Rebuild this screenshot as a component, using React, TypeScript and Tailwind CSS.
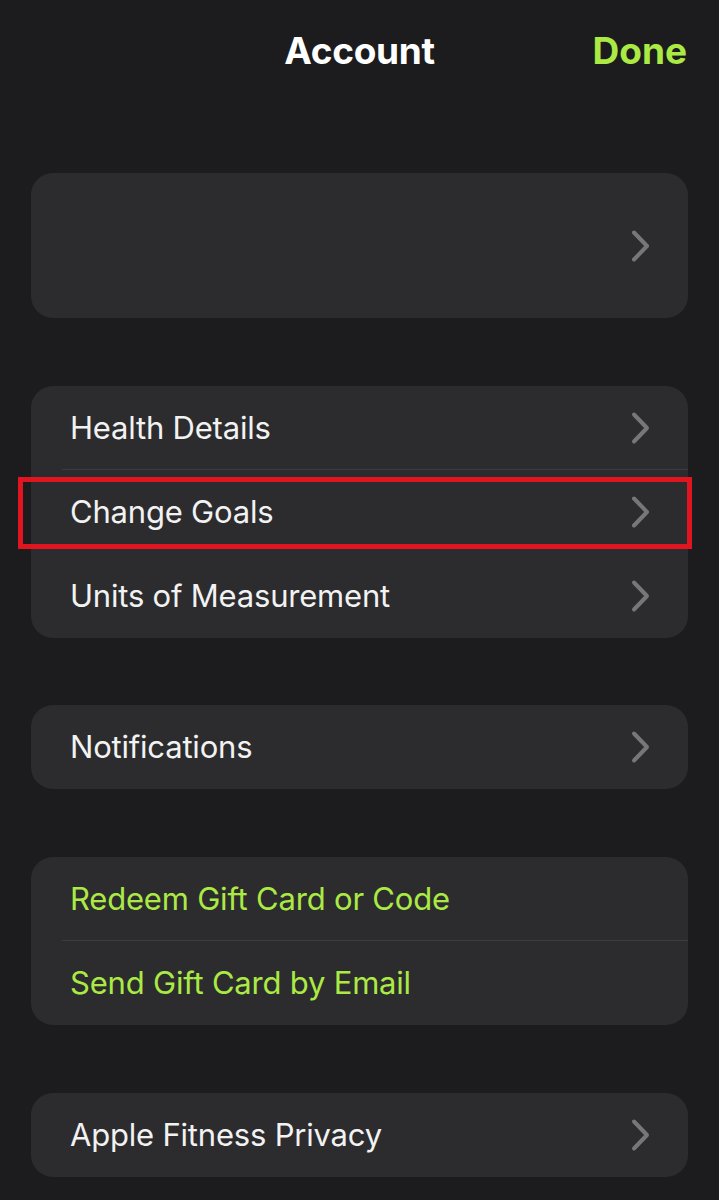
import React from 'react'

const font = { fontFamily: 'Inter, "Noto Sans", sans-serif' }

function Chevron() {
  return (
    <svg width="22" height="34" viewBox="0 0 22 34" fill="none" className="shrink-0">
      <path d="M4 3.5 L17 17 L4 30.5" stroke="#77777b" strokeWidth="4" strokeLinecap="round" strokeLinejoin="round" />
    </svg>
  )
}

type RowProps = {
  label: string
  green?: boolean
  chevron?: boolean
  divider?: boolean
  highlight?: boolean
}

function Row({ label, green, chevron = true, divider, highlight }: RowProps) {
  return (
    <div className="relative h-[84px] flex items-center pl-[39px] pr-[36px]">
      <span className={`flex-1 text-[31px] tracking-[-0.2px] ${green ? 'text-[#abea44]' : 'text-[#f2f2f2]'}`}>
        {label}
      </span>
      {chevron && <Chevron />}
      {divider && <div className="absolute left-[31px] right-0 bottom-0 h-px bg-[#3d3d40]" />}
      {highlight && (
        <div className="absolute -left-[13px] -right-[4px] top-[7px] bottom-[5px] border-[5px] border-[#e0151f]" />
      )}
    </div>
  )
}

function Card({ children, className = '' }: { children: React.ReactNode; className?: string }) {
  return <div className={`mx-[31px] rounded-[22px] bg-[#2c2c2e] ${className}`}>{children}</div>
}

export default function App() {
  return (
    <div className="min-h-[1200px] bg-[#1c1c1e] pb-[24px]" style={font}>
      <div className="relative h-[173px]">
        <div className="absolute left-0 right-0 top-[23px] text-center text-[37px] font-bold text-white tracking-[-0.3px]">
          Account
        </div>
        <div className="absolute right-[32px] top-[23px] text-[37px] font-bold text-[#abea44] tracking-[0px]">
          Done
        </div>
      </div>

      <Card className="h-[145px] flex items-center justify-end pr-[36px]">
        <Chevron />
      </Card>

      <Card className="mt-[68px]">
        <Row label="Health Details" divider />
        <Row label="Change Goals" highlight />
        <Row label="Units of Measurement" />
      </Card>

      <Card className="mt-[67px]">
        <Row label="Notifications" />
      </Card>

      <Card className="mt-[68px]">
        <Row label="Redeem Gift Card or Code" green chevron={false} divider />
        <Row label="Send Gift Card by Email" green chevron={false} />
      </Card>

      <Card className="mt-[68px]">
        <Row label="Apple Fitness Privacy" />
      </Card>
    </div>
  )
}
